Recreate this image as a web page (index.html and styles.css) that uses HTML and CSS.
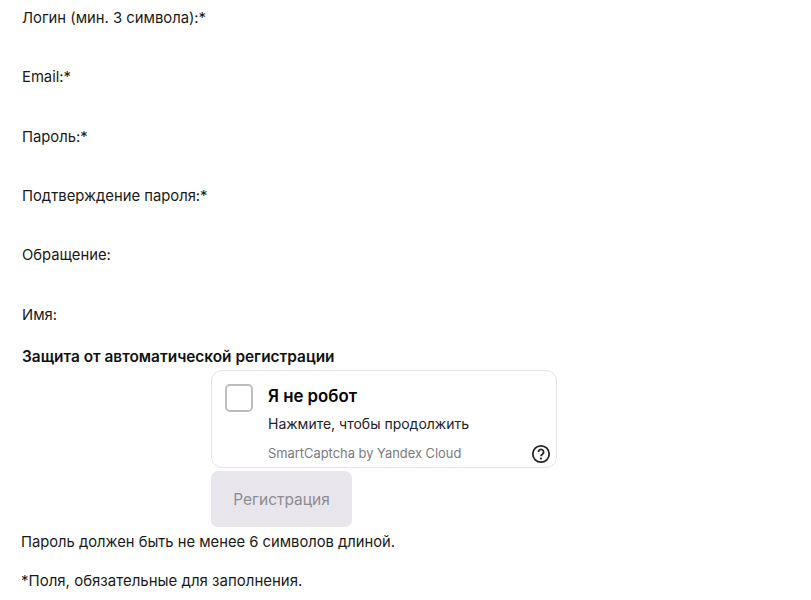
FILE: index.html
```html
<!DOCTYPE html>
<html lang="ru">
<head>
  <meta charset="UTF-8">
  <title>Регистрация</title>
  <link rel="stylesheet" href="styles.css">
</head>
<body>
<form class="reg-form">
  <div class="field">Логин (мин. 3 символа):*</div>
  <div class="field">Email:*</div>
  <div class="field">Пароль:*</div>
  <div class="field">Подтверждение пароля:*</div>
  <div class="field">Обращение:</div>
  <div class="field">Имя:</div>
  <div class="captcha-title">Защита от автоматической регистрации</div>
  <div class="captcha-col">
    <div class="captcha">
      <div class="captcha-box"></div>
      <div class="captcha-body">
        <div class="captcha-head">Я не робот</div>
        <div class="captcha-sub">Нажмите, чтобы продолжить</div>
        <div class="captcha-foot">
          <span>SmartCaptcha by Yandex Cloud</span>
          <svg class="help" width="20" height="20" viewBox="0 0 20 20" xmlns="http://www.w3.org/2000/svg">
            <circle cx="10" cy="10" r="8.2" fill="none" stroke="#262626" stroke-width="1.8"/>
            <path d="M7.4 8a2.6 2.6 0 1 1 4 2.2c-.9.6-1.4 1-1.4 2" fill="none" stroke="#262626" stroke-width="1.8"/>
            <circle cx="10" cy="14.6" r="1.1" fill="#262626"/>
          </svg>
        </div>
      </div>
    </div>
    <button class="submit" type="button" disabled>Регистрация</button>
  </div>
  <p class="note">Пароль должен быть не менее 6 символов длиной.</p>
  <p class="note">*Поля, обязательные для заполнения.</p>
</form>
</body>
</html>
```

FILE: styles.css
```css
body { margin: 0; background: #fff; color: #1a1a1a; font-family: Inter, "Noto Sans", sans-serif; font-size: 14.8px; }
.reg-form { padding: 8.2px 0 0 22px; }
.field { height: 59.3px; line-height: 20px; }
.captcha-title { margin-top: -17px; line-height: 20px; font-size: 15.4px; font-weight: 600; color: #111; }
.captcha-col { margin: 3px 0 0 189px; width: 346px; }
.captcha { display: flex; box-sizing: border-box; width: 346px; height: 98px; border: 1px solid #e4e4e8; border-radius: 11px; padding: 13px 5px 0 13px; }
.captcha-box { box-sizing: border-box; width: 28px; height: 28px; border: 2px solid #bdbdbd; border-radius: 5px; flex: none; }
.captcha-body { flex: 1; margin-left: 15px; }
.captcha-head { font-size: 16.8px; font-weight: 600; line-height: 24px; color: #000; }
.captcha-sub { font-size: 14px; line-height: 20px; margin-top: 6px; color: #22222c; }
.captcha-foot { display: flex; justify-content: space-between; align-items: center; margin-top: 10px; font-size: 12.9px; line-height: 20px; color: #7a7a80; }
.help { display: block; }
.submit { display: block; width: 141px; height: 56px; margin-top: 3px; padding: 2px 0 0; border: 0; border-radius: 7px; background: #e8e6ec; color: #8c8c92; font: inherit; font-size: 15.5px; }
.note { margin: 0 0 0 -1px; line-height: 20px; font-size: 14.75px; }
.captcha-col + .note { margin-top: 5px; }
.note + .note { margin-top: 19px; font-size: 15px; }
```
